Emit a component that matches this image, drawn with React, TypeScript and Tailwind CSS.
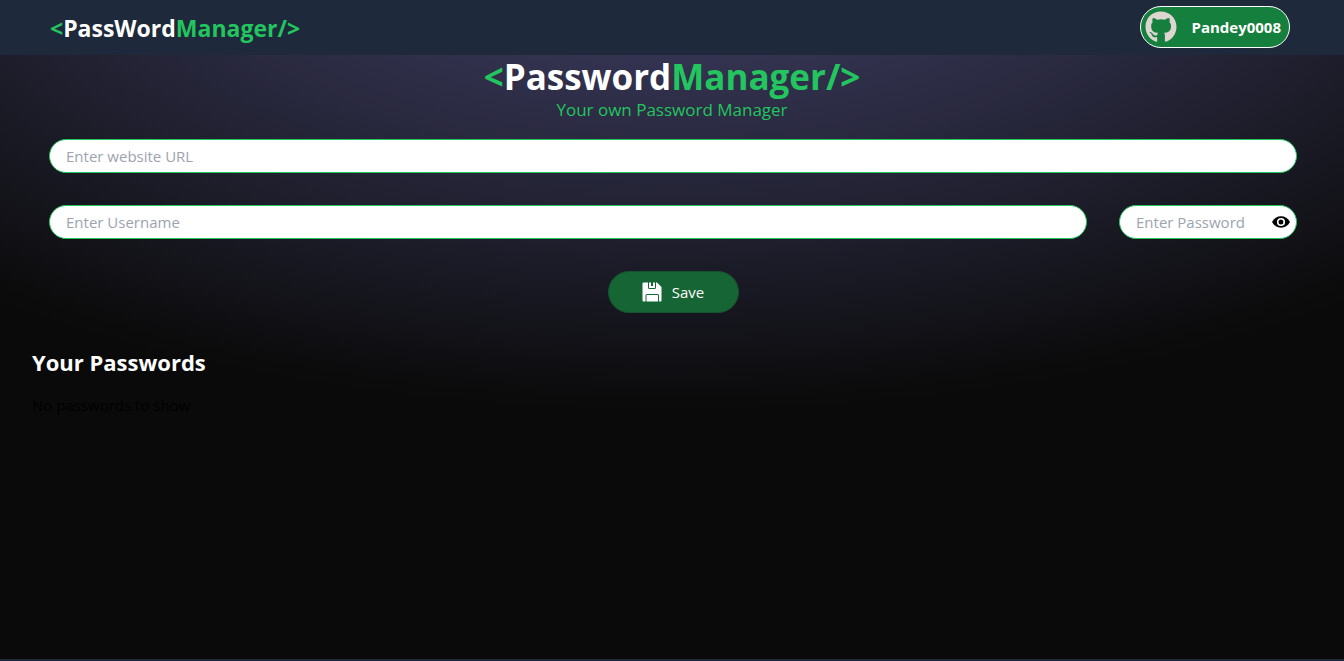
import { useState } from "react";
import type { InputHTMLAttributes } from "react";
import { FaGithub } from "react-icons/fa";

function Brand({ word }: { word: string }) {
  return (
    <>
      <span className="text-[#22c55e]">&lt;</span>
      {word}
      <span className="text-[#22c55e]">Manager/&gt;</span>
    </>
  );
}

function Field({ label, ...rest }: { label: string } & InputHTMLAttributes<HTMLInputElement>) {
  return (
    <input
      aria-label={label}
      placeholder={label}
      className="h-[34px] w-full rounded-full border border-[#22c55e] bg-white px-4 text-[15px] text-black placeholder:text-[#9ca3af]"
      {...rest}
    />
  );
}

function EyeIcon() {
  return (
    <svg viewBox="0 0 18 12" className="h-3 w-[18px]" aria-hidden="true">
      <path d="M0 6C2 2.2 5.2 0.3 9 0.3S16 2.2 18 6c-2 3.8-5.2 5.7-9 5.7S2 9.8 0 6Z" fill="#000" />
      <circle cx="9" cy="6" r="3.3" fill="none" stroke="#fff" strokeWidth="1.6" />
    </svg>
  );
}

function SaveIcon() {
  return (
    <svg viewBox="0 0 20 20" className="size-5" aria-hidden="true">
      <path
        fill="#fff"
        d="M1.5 0.5H6V5.5A1.5 1.5 0 0 0 7.5 7H12.5A1.5 1.5 0 0 0 14 5.5V0.5H15L19.5 5V18.5A1 1 0 0 1 18.5 19.5H17V13.5A1.5 1.5 0 0 0 15.5 12H5A1.5 1.5 0 0 0 3.5 13.5V19.5H1.5A1 1 0 0 1 .5 18.5V1.5A1 1 0 0 1 1.5 .5Z"
      />
      <path fill="#fff" d="M7 .5H9V4H11V.5H13V5.5A.5.5 0 0 1 12.5 6H7.5A.5.5 0 0 1 7 5.5ZM5 13H15.5A.5.5 0 0 1 16 13.5V19.5H4.5V13.5A.5.5 0 0 1 5 13Z" />
    </svg>
  );
}

export default function App() {
  const [visible, setVisible] = useState(false);

  return (
    <div className="flex min-h-screen flex-col bg-[#0a0a0a] bg-[radial-gradient(ellipse_80%_80%_at_50%_-20%,rgba(120,119,198,0.3),rgba(255,255,255,0))] font-['Open_Sans','Noto_Sans',sans-serif] text-white">
      <nav className="flex h-[55px] items-start justify-between bg-[#1e293b] pt-1.5 pr-[54px] pl-[50px]">
        <a href="#" className="text-[23px] leading-[44px] font-bold">
          <Brand word="PassWord" />
        </a>
        <button className="flex h-[42px] w-[150px] items-center justify-between rounded-full border border-white bg-[#15803d] pr-2 pl-1 text-[15px] font-bold">
          <FaGithub className="size-8 text-[#ddd6d0]" aria-hidden="true" />
          Pandey0008
        </button>
      </nav>

      <main className="flex-1 bg-[radial-gradient(ellipse_80%_80%_at_50%_-20%,rgba(120,119,198,0.3),rgba(255,255,255,0))]">
        <header className="flex flex-col items-center">
          <h1 className="text-[35px] leading-[44px] font-bold">
            <Brand word="Password" />
          </h1>
          <p className="text-[17px] leading-[22px] text-[#22c55e]">Your own Password Manager</p>
        </header>

        <form className="flex flex-col items-center gap-8 pt-[18px] pr-[47px] pl-[49px]" onSubmit={(e) => e.preventDefault()}>
          <Field label="Enter website URL" name="site" />
          <div className="flex w-full gap-8">
            <Field label="Enter Username" name="username" autoComplete="off" />
            <div className="relative w-[178px] shrink-0">
              <Field label="Enter Password" name="password" type={visible ? "text" : "password"} />
              <button
                type="button"
                aria-label="Show password"
                className="absolute inset-y-0 right-[7px] flex items-center"
                onClick={() => setVisible(!visible)}
              >
                <EyeIcon />
              </button>
            </div>
          </div>
          <button className="flex h-[42px] w-[131px] items-center justify-center gap-2.5 rounded-full border border-[#14532d] bg-[#166534] text-[15px]">
            <SaveIcon />
            Save
          </button>
        </form>

        <section className="px-8 pt-[34px]">
          <h2 className="text-[22px] leading-[30px] font-bold">Your Passwords</h2>
          <p className="pt-4 text-[15px] leading-6 text-black">No passwords to show</p>
        </section>
      </main>

      <footer className="h-0.5 bg-[#1e293b]" />
    </div>
  );
}
